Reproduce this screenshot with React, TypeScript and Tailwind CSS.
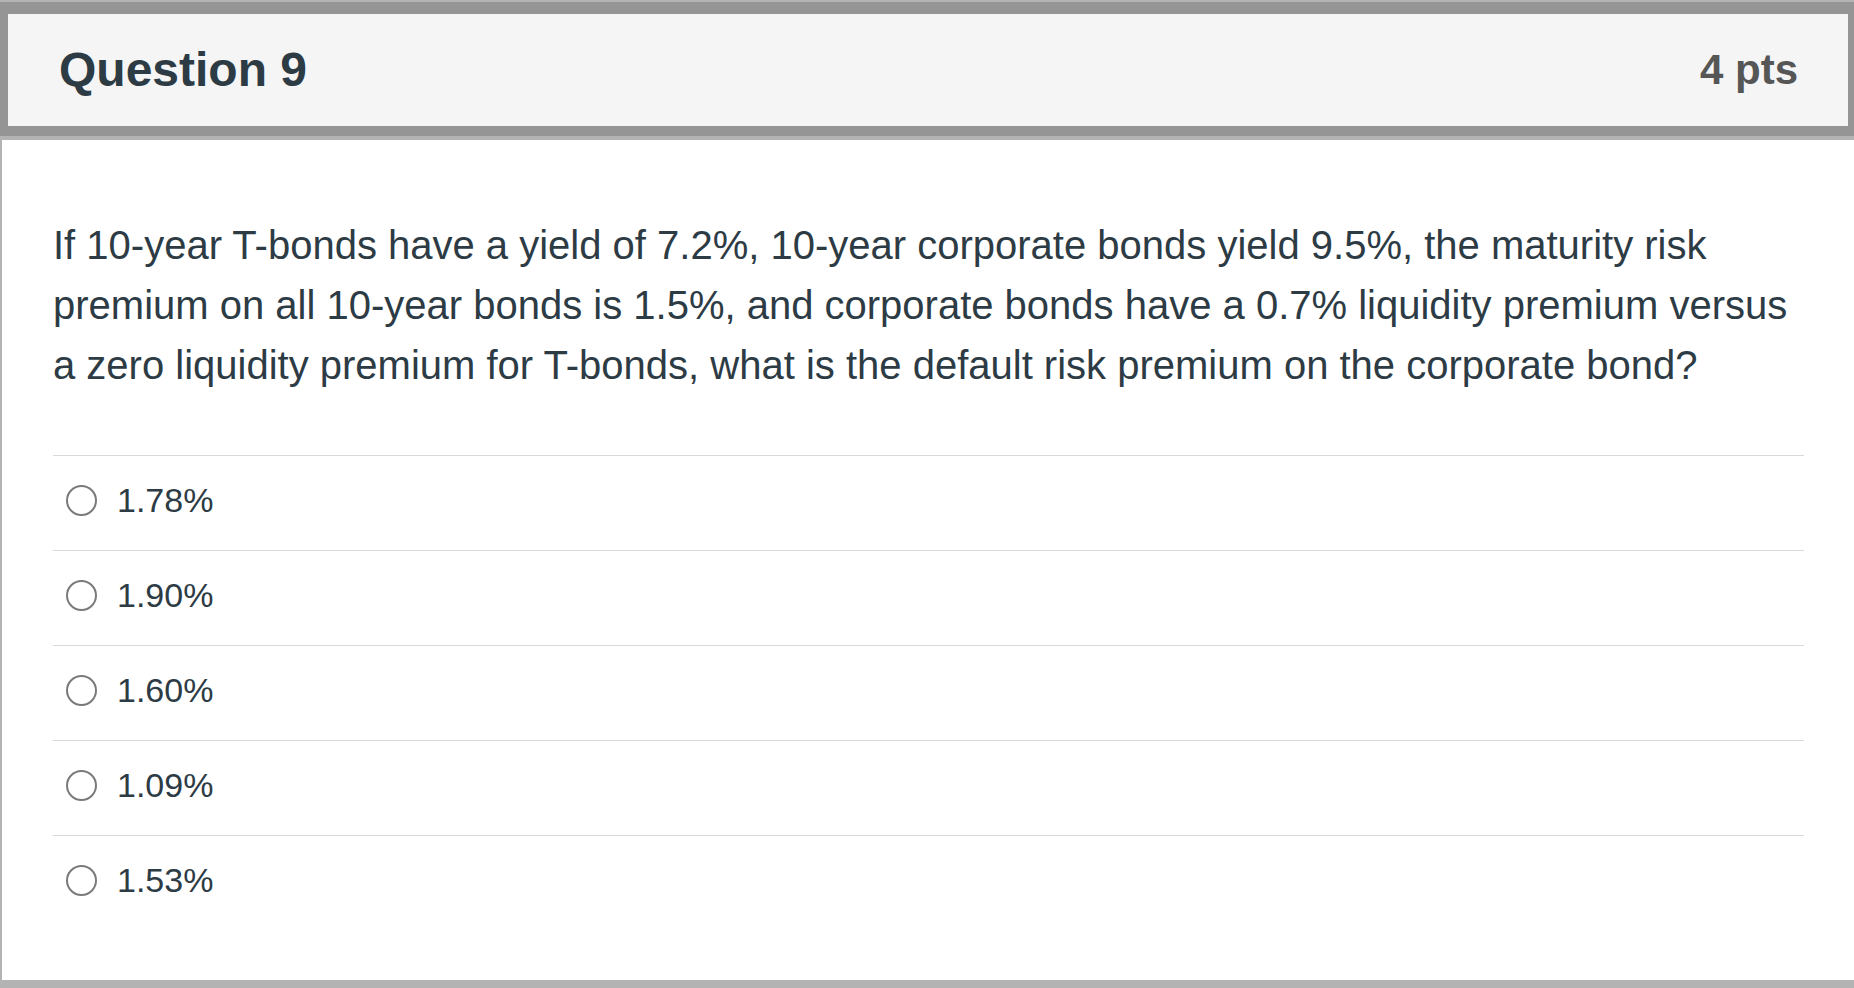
import React from 'react';

const answers = ['1.78%', '1.90%', '1.60%', '1.09%', '1.53%'];

const AnswerRow: React.FC<{ label: string }> = ({ label }) => (
  <div className="h-[95px] border-t border-[#d9d9d9] flex items-center pb-[6px]">
    <span className="ml-[13px] w-[31px] h-[31px] rounded-full border-2 border-[#7a7a7a] bg-white shrink-0" />
    <span className="ml-[20px] text-[34px] text-[#2d3b45] leading-none">{label}</span>
  </div>
);

export default function App() {
  return (
    <div className="w-[1854px] h-[988px] bg-white flex flex-col font-['Liberation_Sans',Arial,sans-serif]">
      <div className="h-[2px] bg-[#b3b3b3]" />

      {/* header */}
      <div className="h-[134px] border-t-[12px] border-l-[8px] border-r-[6px] border-b-[10px] border-[#959595] bg-[#f5f5f5] flex items-center justify-between pl-[51px] pr-[50px]">
        <h2 className="text-[48px] font-bold text-[#2d3b45] leading-none">Question 9</h2>
        <div className="text-[42px] font-bold text-[#565656] leading-none">4 pts</div>
      </div>
      <div className="h-[4px] bg-[#b3b3b3]" />

      {/* body */}
      <div className="flex-1 border-l-2 border-b-[8px] border-[#b3b3b3] pl-[51px] pr-[50px] pt-[75px]">
        <p className="text-[40px] leading-[60px] text-[#2d3b45]">
          If 10-year T-bonds have a yield of 7.2%, 10-year corporate bonds yield 9.5%, the maturity risk premium on all 10-year bonds is 1.5%, and corporate bonds have a 0.7% liquidity premium versus a zero liquidity premium for T-bonds, what is the default risk premium on the corporate bond?
        </p>

        <div className="mt-[60px]">
          {answers.map(a => (
            <AnswerRow key={a} label={a} />
          ))}
        </div>
      </div>
    </div>
  );
}
